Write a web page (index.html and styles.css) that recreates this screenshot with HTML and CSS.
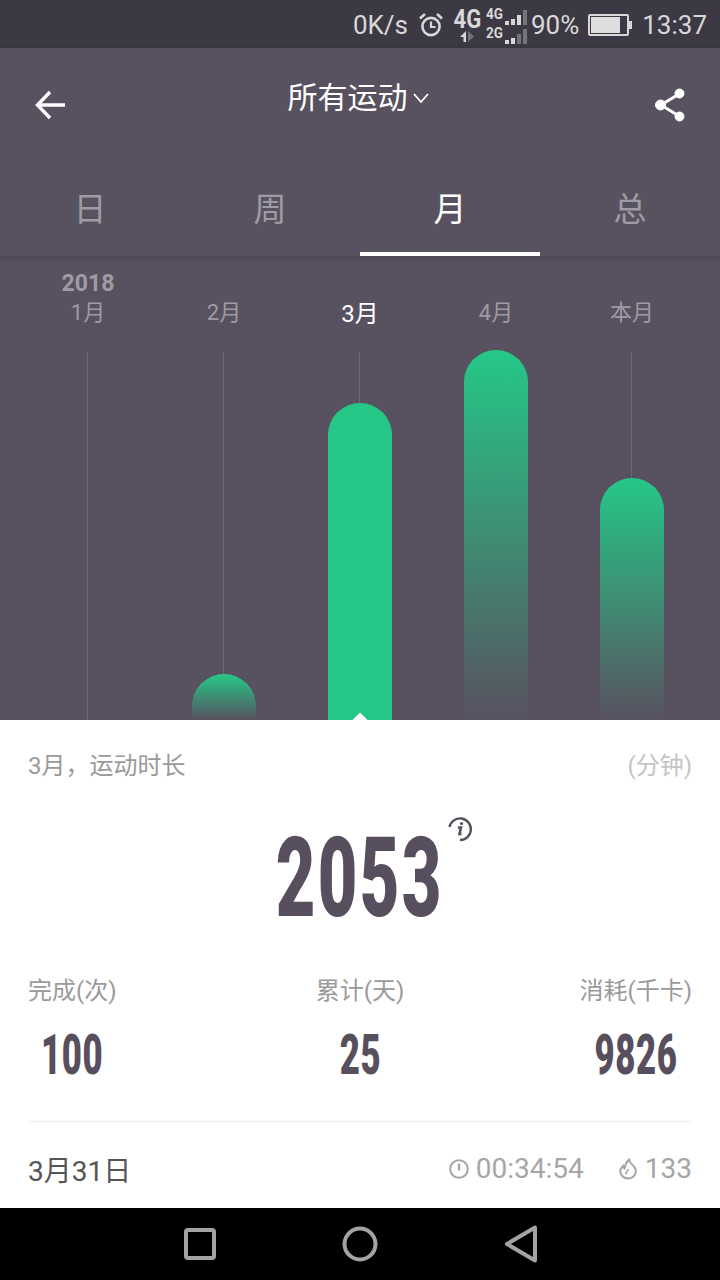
FILE: index.html
```html
<!DOCTYPE html>
<html lang="zh-CN">
<head>
  <meta charset="UTF-8">
  <meta name="viewport" content="width=device-width, initial-scale=1.0">
  <title>所有运动</title>
  <link rel="stylesheet" href="styles.css">
</head>
<body>
  <div class="phone">
    <!-- Status bar -->
    <div class="status-bar">
      <span>0K/s</span>
      <svg class="alarm-icon" width="26" height="26" viewBox="0 0 26 26" fill="none" stroke="#d8d8d8" stroke-width="2.6">
        <circle cx="13" cy="14.5" r="8.6"/>
        <path d="M13 9.500v5.500h4.500" stroke-width="2.2"/>
        <path d="M2 6.500 7 2M24 6.500 19 2"/>
      </svg>
      <div class="net-main">
        <b>4G</b>
        <svg width="16" height="11" viewBox="0 0 16 11"><path d="M7 0v11H4.500V6H1z" fill="#d8d8d8"/><path d="M9 0v11l6-5.500z" fill="#77737d"/></svg>
      </div>
      <div class="net-sub">
        <div class="net-row"><b>4G</b><i class="dot"></i><i class="dot d2"></i><i class="sig s1"></i><i class="sig s2"></i></div>
        <div class="net-row"><b>2G</b><i class="dot"></i><i class="dot d2"></i><i class="sig s1"></i><i class="sig s2"></i></div>
      </div>
      <span>90%</span>
      <div class="battery"><div class="battery-fill"></div></div>
      <span>13:37</span>
    </div>

    <!-- Title and tabs -->
    <header class="top">
      <div class="title-row">
        <svg width="32" height="32" viewBox="0 0 32 32" fill="none" stroke="#fff" stroke-width="3.4">
          <path d="M30 16H3M15 3 2.500 16 15 29"/>
        </svg>
        <div class="title">所有运动<svg class="title-arrow" width="18" height="12" viewBox="0 0 18 12" fill="none" stroke="#fff" stroke-width="1.8"><path d="M2 2l7 8 7-8"/></svg></div>
        <svg width="32" height="36" viewBox="0 0 32 36" fill="#fff" stroke="#fff">
          <path d="M25 7 7 18l18 11" fill="none" stroke-width="3"/>
          <circle cx="25.500" cy="6.500" r="4.500"/><circle cx="6.500" cy="18" r="5"/><circle cx="25.500" cy="29.500" r="4.500"/>
        </svg>
      </div>
      <nav class="tabs">
        <div class="tab">日</div>
        <div class="tab">周</div>
        <div class="tab active">月</div>
        <div class="tab">总</div>
      </nav>
    </header>

    <!-- Monthly bars -->
    <section class="chart">
      <div class="month">
        <div class="year">2018</div>
        <div class="month-label">1月</div>
        <div class="track"></div>
      </div>
      <div class="month">
        <div class="month-label">2月</div>
        <div class="track"><div class="bar" style="height: 46px"></div></div>
      </div>
      <div class="month current">
        <div class="month-label">3月</div>
        <div class="track"><div class="bar" style="height: 317px"></div><i class="marker"></i></div>
      </div>
      <div class="month">
        <div class="month-label">4月</div>
        <div class="track"><div class="bar" style="height: 370px"></div></div>
      </div>
      <div class="month">
        <div class="month-label">本月</div>
        <div class="track"><div class="bar" style="height: 242px"></div></div>
      </div>
    </section>

    <!-- Summary -->
    <section class="panel">
      <div class="panel-head">
        <span>3月，运动时长</span>
        <span class="unit">(分钟)</span>
      </div>
      <div class="total">
        <span class="total-num">2053</span>
        <svg class="info-icon" width="26" height="26" viewBox="0 0 26 26" fill="none" stroke="#574f5d" stroke-width="2.4">
          <path d="M2.500 11A10.800 10.800 0 1 1 13 24"/>
          <path d="M11 11.500h3l-1.500 6.500h2" stroke-width="2.600"/>
          <circle cx="14.500" cy="7.500" r="1.600" fill="#574f5d" stroke="none"/>
        </svg>
      </div>
      <div class="stats">
        <div class="stat">
          <div class="stat-label">完成(次)</div>
          <div class="stat-num">100</div>
        </div>
        <div class="stat">
          <div class="stat-label">累计(天)</div>
          <div class="stat-num">25</div>
        </div>
        <div class="stat">
          <div class="stat-label">消耗(千卡)</div>
          <div class="stat-num">9826</div>
        </div>
      </div>
      <div class="record">
        <span class="record-date">3月31日</span>
        <div class="record-meta">
          <svg width="20" height="20" viewBox="0 0 20 20" fill="none" stroke="#a6a6a6" stroke-width="2">
            <circle cx="10" cy="10" r="8.800"/><path d="M10 4.500v7" stroke-width="2.400"/>
          </svg>
          <span>00:34:54</span>
          <svg class="flame-icon" width="20" height="22" viewBox="0 0 20 22" fill="none" stroke="#a6a6a6" stroke-width="2">
            <path d="M11 1.500c.5 4 5 5.500 6.500 9.500 1.500 5-2.500 9.500-7.500 9.500S1.500 16 2.500 11.500c.5-1.500 1.500-2.500 2.500-3.500.2 1.500.5 2 1.500 2.500C7 7 8.500 4 11 1.500z"/>
            <path d="M10.500 11c-.5 2-3 3-2.500 5.500" stroke-width="1.600"/>
          </svg>
          <span>133</span>
        </div>
      </div>
    </section>

    <!-- Navigation keys -->
    <footer class="nav-bar">
      <svg width="32" height="32" viewBox="0 0 32 32" fill="none" stroke="#a3a3a3" stroke-width="4"><rect x="2" y="2" width="28" height="28" rx="2"/></svg>
      <svg width="36" height="36" viewBox="0 0 36 36" fill="none" stroke="#a3a3a3" stroke-width="4"><circle cx="18" cy="18" r="15.500"/></svg>
      <svg width="34" height="38" viewBox="0 0 34 38" fill="none" stroke="#a3a3a3" stroke-width="4" stroke-linejoin="round"><path d="M31 2.500v33L3 19z"/></svg>
    </footer>
  </div>
</body>
</html>
```

FILE: styles.css
```css
* {
  box-sizing: border-box;
}

body {
  margin: 0;
  font-family: Roboto, "Noto Sans CJK SC", sans-serif;
  background-color: #fff;
}

.phone {
  width: 720px;
  height: 1280px;
  display: flex;
  flex-direction: column;
  overflow: hidden;
}

/* Status bar */
.status-bar {
  height: 48px;
  padding: 2px 13px 0 0;
  display: flex;
  justify-content: flex-end;
  align-items: center;
  gap: 6px;
  background-color: #3d3944;
  color: #d8d8d8;
  font-size: 26px;
}

.alarm-icon {
  margin: 0 3px 0 4px;
}

.net-main {
  width: 28px;
  margin-right: -2px;
  display: flex;
  flex-direction: column;
  align-items: center;
  line-height: 1;
}

.net-main b {
  font-size: 26px;
  line-height: 23px;
  transform: scaleX(0.85);
}

.net-sub {
  margin-right: -2px;
  display: flex;
  flex-direction: column;
  gap: 1px;
}

.net-row {
  height: 18px;
  display: flex;
  align-items: flex-end;
  gap: 2px;
}

.net-row b {
  width: 18px;
  align-self: flex-start;
  font-size: 15px;
  line-height: 15px;
  transform: scaleX(0.9);
}

.dot {
  width: 4px;
  height: 4px;
  background-color: #d8d8d8;
}

.d2 {
  height: 6px;
}

.sig {
  width: 4px;
  background-color: #77737d;
}

.s1 {
  height: 10px;
  background-color: #d8d8d8;
}

.s2 {
  height: 15px;
}

.net-row:last-child .s1 {
  background-color: #77737d;
}

.battery {
  width: 41px;
  height: 22px;
  margin: 0 7px 0 3px;
  padding: 1px 7px 1px 1px;
  border: 2px solid #d8d8d8;
  border-radius: 2px;
  position: relative;
}

.battery::after {
  content: "";
  position: absolute;
  right: -5px;
  top: 5px;
  width: 3px;
  height: 8px;
  background-color: #d8d8d8;
}

.battery-fill {
  height: 100%;
  background-color: #dedede;
}

/* Title and tabs */
.top {
  height: 208px;
  display: flex;
  flex-direction: column;
  background-color: #585260;
  box-shadow: 0 2px 6px rgba(0, 0, 0, 0.2);
  position: relative;
  z-index: 1;
}

.title-row {
  height: 132px;
  padding: 0 34px 18px 35px;
  display: flex;
  justify-content: space-between;
  align-items: center;
}

.title {
  margin: -20px 4px 0 0;
  display: flex;
  align-items: center;
  gap: 4px;
  color: #fff;
  font-size: 30px;
  font-weight: 400;
}

.title-arrow {
  margin-top: 5px;
}

.tabs {
  flex: 1;
  display: grid;
  grid-template-columns: repeat(4, 1fr);
}

.tab {
  padding-top: 5px;
  text-align: center;
  color: #9f9ba5;
  font-size: 33px;
  font-weight: 400;
  line-height: 50px;
}

.tab.active {
  color: #fff;
  border-bottom: 4px solid #fff;
}

/* Monthly bars */
.chart {
  height: 464px;
  padding: 0 20px;
  display: grid;
  grid-template-columns: repeat(5, 136px);
  grid-template-rows: 464px;
  background-color: #585260;
}

.month {
  min-height: 0;
  display: flex;
  flex-direction: column;
  align-items: center;
  position: relative;
}

.year {
  position: absolute;
  top: 14px;
  color: #9f9ba5;
  font-size: 23px;
  font-weight: 700;
}

.month-label {
  height: 96px;
  flex-shrink: 0;
  padding-top: 42px;
  color: #9f9ba5;
  font-size: 22px;
  line-height: 30px;
}

.current .month-label {
  color: #fff;
  font-size: 24px;
  line-height: 33px;
}

.track {
  flex: 1;
  min-height: 0;
  width: 64px;
  display: flex;
  align-items: flex-end;
  position: relative;
}

.track::before {
  content: "";
  position: absolute;
  left: 31px;
  top: 0;
  bottom: 0;
  width: 1px;
  background-color: #6c6773;
}

.bar {
  width: 64px;
  flex-shrink: 0;
  border-radius: 32px 32px 0 0;
  background: linear-gradient(#25c887, #585260);
  position: relative;
}

.current .bar {
  background: #25c887;
}

.marker {
  position: absolute;
  left: 26px;
  bottom: -7px;
  width: 12px;
  height: 12px;
  background-color: #fff;
  transform: rotate(45deg);
}

/* Summary */
.panel {
  flex: 1;
  padding: 0 28px;
  background-color: #fff;
  position: relative;
  z-index: 1;
}

.panel-head {
  height: 92px;
  padding-top: 30px;
  display: flex;
  justify-content: space-between;
  color: #9a9a9a;
  font-size: 24px;
  line-height: 32px;
}

.unit {
  color: #c4c4c4;
}

.total {
  height: 163px;
  display: flex;
  justify-content: center;
  position: relative;
}

.total-num {
  height: 132px;
  color: #574f5d;
  font-size: 112px;
  font-weight: 900;
  line-height: 132px;
  letter-spacing: 4px;
  transform: scaleX(0.61);
}

.info-icon {
  position: absolute;
  left: 419px;
  top: 4px;
}

.stats {
  display: grid;
  grid-template-columns: 1fr auto 1fr;
}

.stat {
  display: flex;
  flex-direction: column;
  align-items: center;
}

.stat:first-child {
  justify-self: start;
}

.stat:last-child {
  justify-self: end;
}

.stat-label {
  color: #9a9a9a;
  font-size: 24px;
  line-height: 32px;
}

.stat-num {
  margin: 18px -40px 0;
  color: #574f5d;
  font-size: 56px;
  font-weight: 900;
  line-height: 60px;
  letter-spacing: 1px;
  transform: scaleX(0.62);
}

.record {
  height: 87px;
  margin-top: 36px;
  padding-top: 7px;
  border-top: 1px solid #eee;
  display: flex;
  justify-content: space-between;
  align-items: center;
  font-size: 28px;
}

.record-date {
  color: #555;
}

.record-meta {
  display: flex;
  align-items: center;
  gap: 7px;
  color: #a6a6a6;
}

.flame-icon {
  margin-left: 27px;
}

/* Navigation keys */
.nav-bar {
  height: 72px;
  padding-left: 2px;
  display: flex;
  justify-content: center;
  align-items: center;
  gap: 126px;
  background-color: #000;
}
```
